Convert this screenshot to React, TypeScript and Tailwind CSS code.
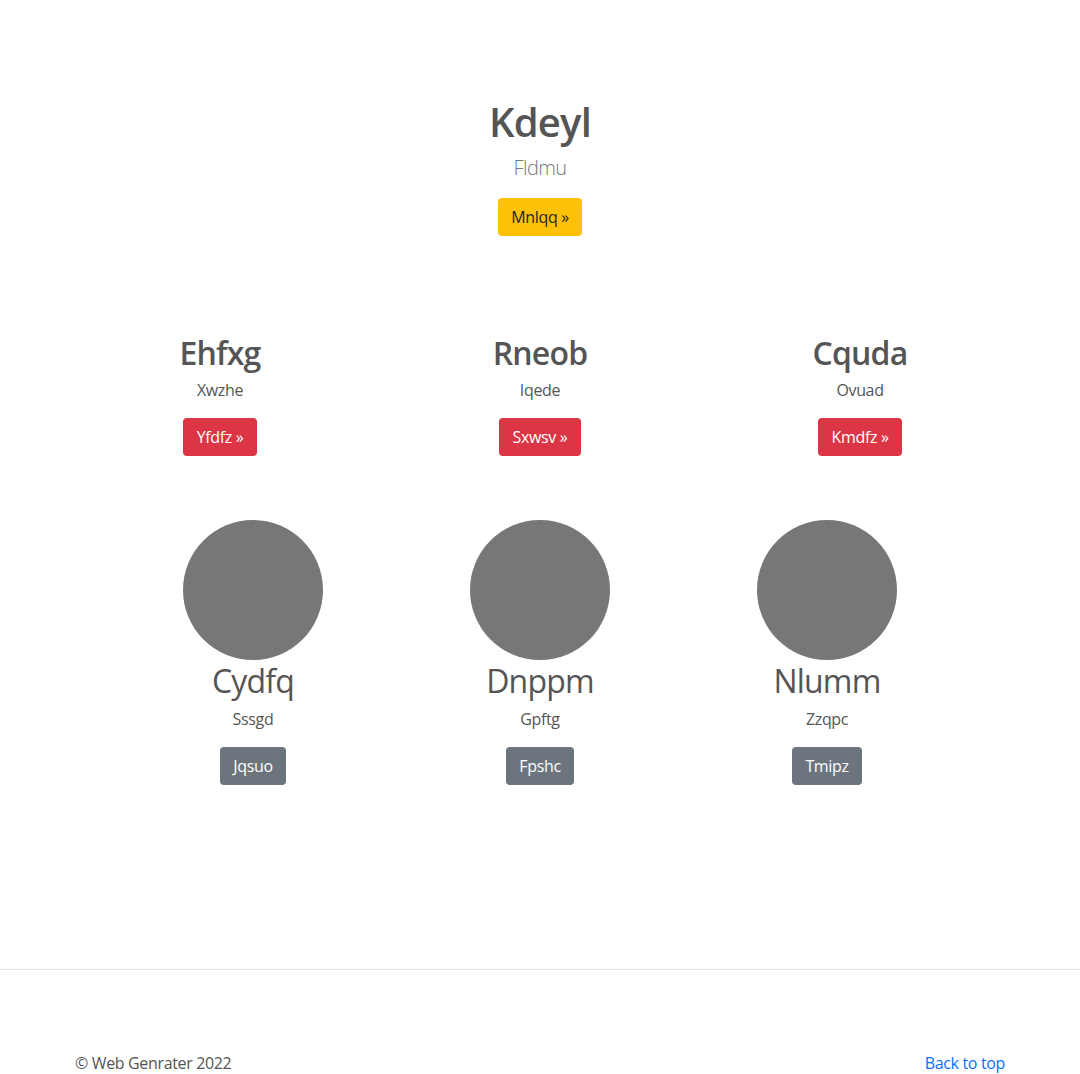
export default function App() {
    const features = [
        { title: "Ehfxg", text: "Xwzhe", btn: "Yfdfz" },
        { title: "Rneob", text: "Iqede", btn: "Sxwsv" },
        { title: "Cquda", text: "Ovuad", btn: "Kmdfz" }
    ];
    const people = [
        { name: "Cydfq", text: "Sssgd", btn: "Jqsuo" },
        { name: "Dnppm", text: "Gpftg", btn: "Fpshc" },
        { name: "Nlumm", text: "Zzqpc", btn: "Tmipz" }
    ];

    return (
        <div className="min-h-[1074px] bg-white text-[#555] font-['Open_Sans',sans-serif] tracking-[-0.35px] flex flex-col">
            {/* Hero */}
            <section className="pt-[98px] flex flex-col items-center text-center">
                <h1 className="text-[40px] leading-[48px] font-semibold mb-[7px] tracking-[-0.8px]">Kdeyl</h1>
                <p className="text-[20px] leading-[30px] font-light text-[#777] mb-[15px] tracking-[-0.6px]">Fldmu</p>
                <a className="bg-[#ffc107] text-[#212529] text-[16px] leading-[24px] px-[13px] py-[7px] rounded">Mnlqq &raquo;</a>
            </section>

            {/* Features */}
            <section className="mt-[98px] w-[960px] mx-auto grid grid-cols-3">
                {features.map((f) => (
                    <div key={f.title} className="flex flex-col items-center text-center">
                        <h2 className="text-[32px] leading-[38px] font-semibold mb-[6px] tracking-[-0.8px]">{f.title}</h2>
                        <p className="text-[16px] leading-[24px] mb-4">{f.text}</p>
                        <a className="bg-[#dc3545] text-white text-[16px] leading-[24px] px-[14px] py-[7px] rounded">{f.btn} &raquo;</a>
                    </div>
                ))}
            </section>

            {/* People */}
            <section className="mt-[64px] w-[861px] mx-auto grid grid-cols-3">
                {people.map((p) => (
                    <div key={p.name} className="flex flex-col items-center text-center">
                        <div className="w-[140px] h-[140px] rounded-full bg-[#777]" />
                        <h2 className="text-[32px] leading-[38px] font-normal mt-[2px] mb-[7px] tracking-[-0.8px]">{p.name}</h2>
                        <p className="text-[16px] leading-[24px] mb-4">{p.text}</p>
                        <a className="bg-[#6c757d] text-white text-[16px] leading-[24px] px-[13px] py-[7px] rounded">{p.btn}</a>
                    </div>
                ))}
            </section>

            <hr className="mt-[184px] border-t border-[#e5e5e5]" />

            {/* Footer */}
            <footer className="w-[960px] mx-auto px-[15px] pt-[81px] flex justify-between text-[16px] leading-[24px]">
                <p>&copy; Web Genrater 2022</p>
                <a className="text-[#0d6efd]">Back to top</a>
            </footer>
        </div>
    );
}
